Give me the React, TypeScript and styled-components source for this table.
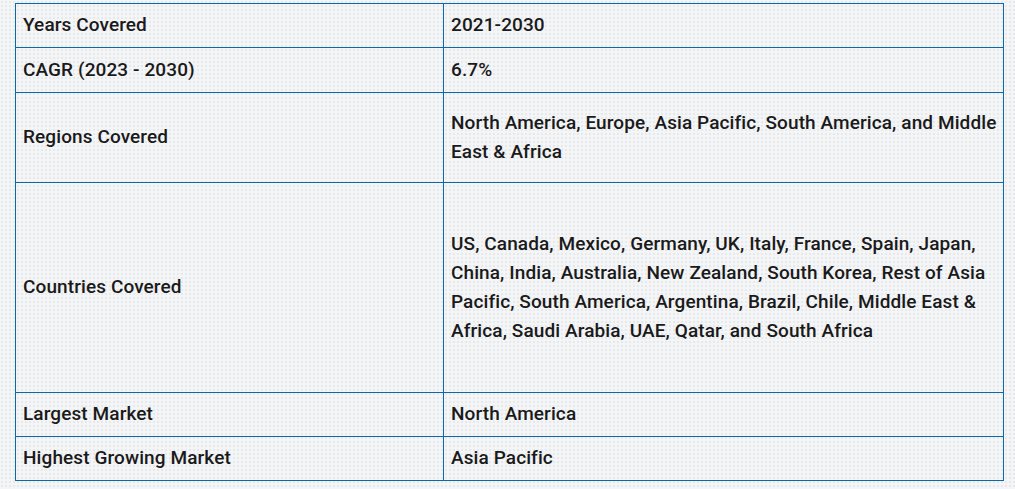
import React from 'react'
import styled, { createGlobalStyle } from 'styled-components'

const GlobalStyle = createGlobalStyle`
  html, body {
    margin: 0;
    padding: 0;
    background-color: #f4f5f7;
    background-image: radial-gradient(#e6e8ec 0.8px, transparent 1px);
    background-size: 4px 4px;
  }
`

const Page = styled.div`
  padding: 3px 11px 0 15px;
  font-family: Roboto, 'Liberation Sans', sans-serif;
`

const Table = styled.table`
  width: 989px;
  border-collapse: collapse;
  table-layout: fixed;
`

const Row = styled.tr<{ $height: number }>`
  height: ${(p) => p.$height}px;
`

const Cell = styled.td<{ $width?: number }>`
  border: 1px solid #0c69a6;
  padding: 0 3px 2px 7px;
  vertical-align: middle;
  font-size: 19px;
  font-weight: 500;
  letter-spacing: 0.1px;
  line-height: 29px;
  color: #1a1a1a;
  width: ${(p) => (p.$width ? `${p.$width}px` : 'auto')};
`

const rows = [
  { label: 'Years Covered', value: '2021-2030', height: 44 },
  { label: 'CAGR (2023 - 2030)', value: '6.7%', height: 45 },
  {
    label: 'Regions Covered',
    value: 'North America, Europe, Asia Pacific, South America, and Middle East & Africa',
    height: 90,
  },
  {
    label: 'Countries Covered',
    value:
      'US, Canada, Mexico, Germany, UK, Italy, France, Spain, Japan, China, India, Australia, New Zealand, South Korea, Rest of Asia Pacific, South America, Argentina, Brazil, Chile, Middle East & Africa, Saudi Arabia, UAE, Qatar, and South Africa',
    height: 210,
  },
  { label: 'Largest Market', value: 'North America', height: 44 },
  { label: 'Highest Growing Market', value: 'Asia Pacific', height: 44 },
]

const App = () => {
  return (
    <>
      <GlobalStyle />
      <Page>
        <Table>
          <tbody>
            {rows.map((r) => (
              <Row key={r.label} $height={r.height}>
                <Cell $width={417}>{r.label}</Cell>
                <Cell>{r.value}</Cell>
              </Row>
            ))}
          </tbody>
        </Table>
      </Page>
    </>
  )
}

export default App
